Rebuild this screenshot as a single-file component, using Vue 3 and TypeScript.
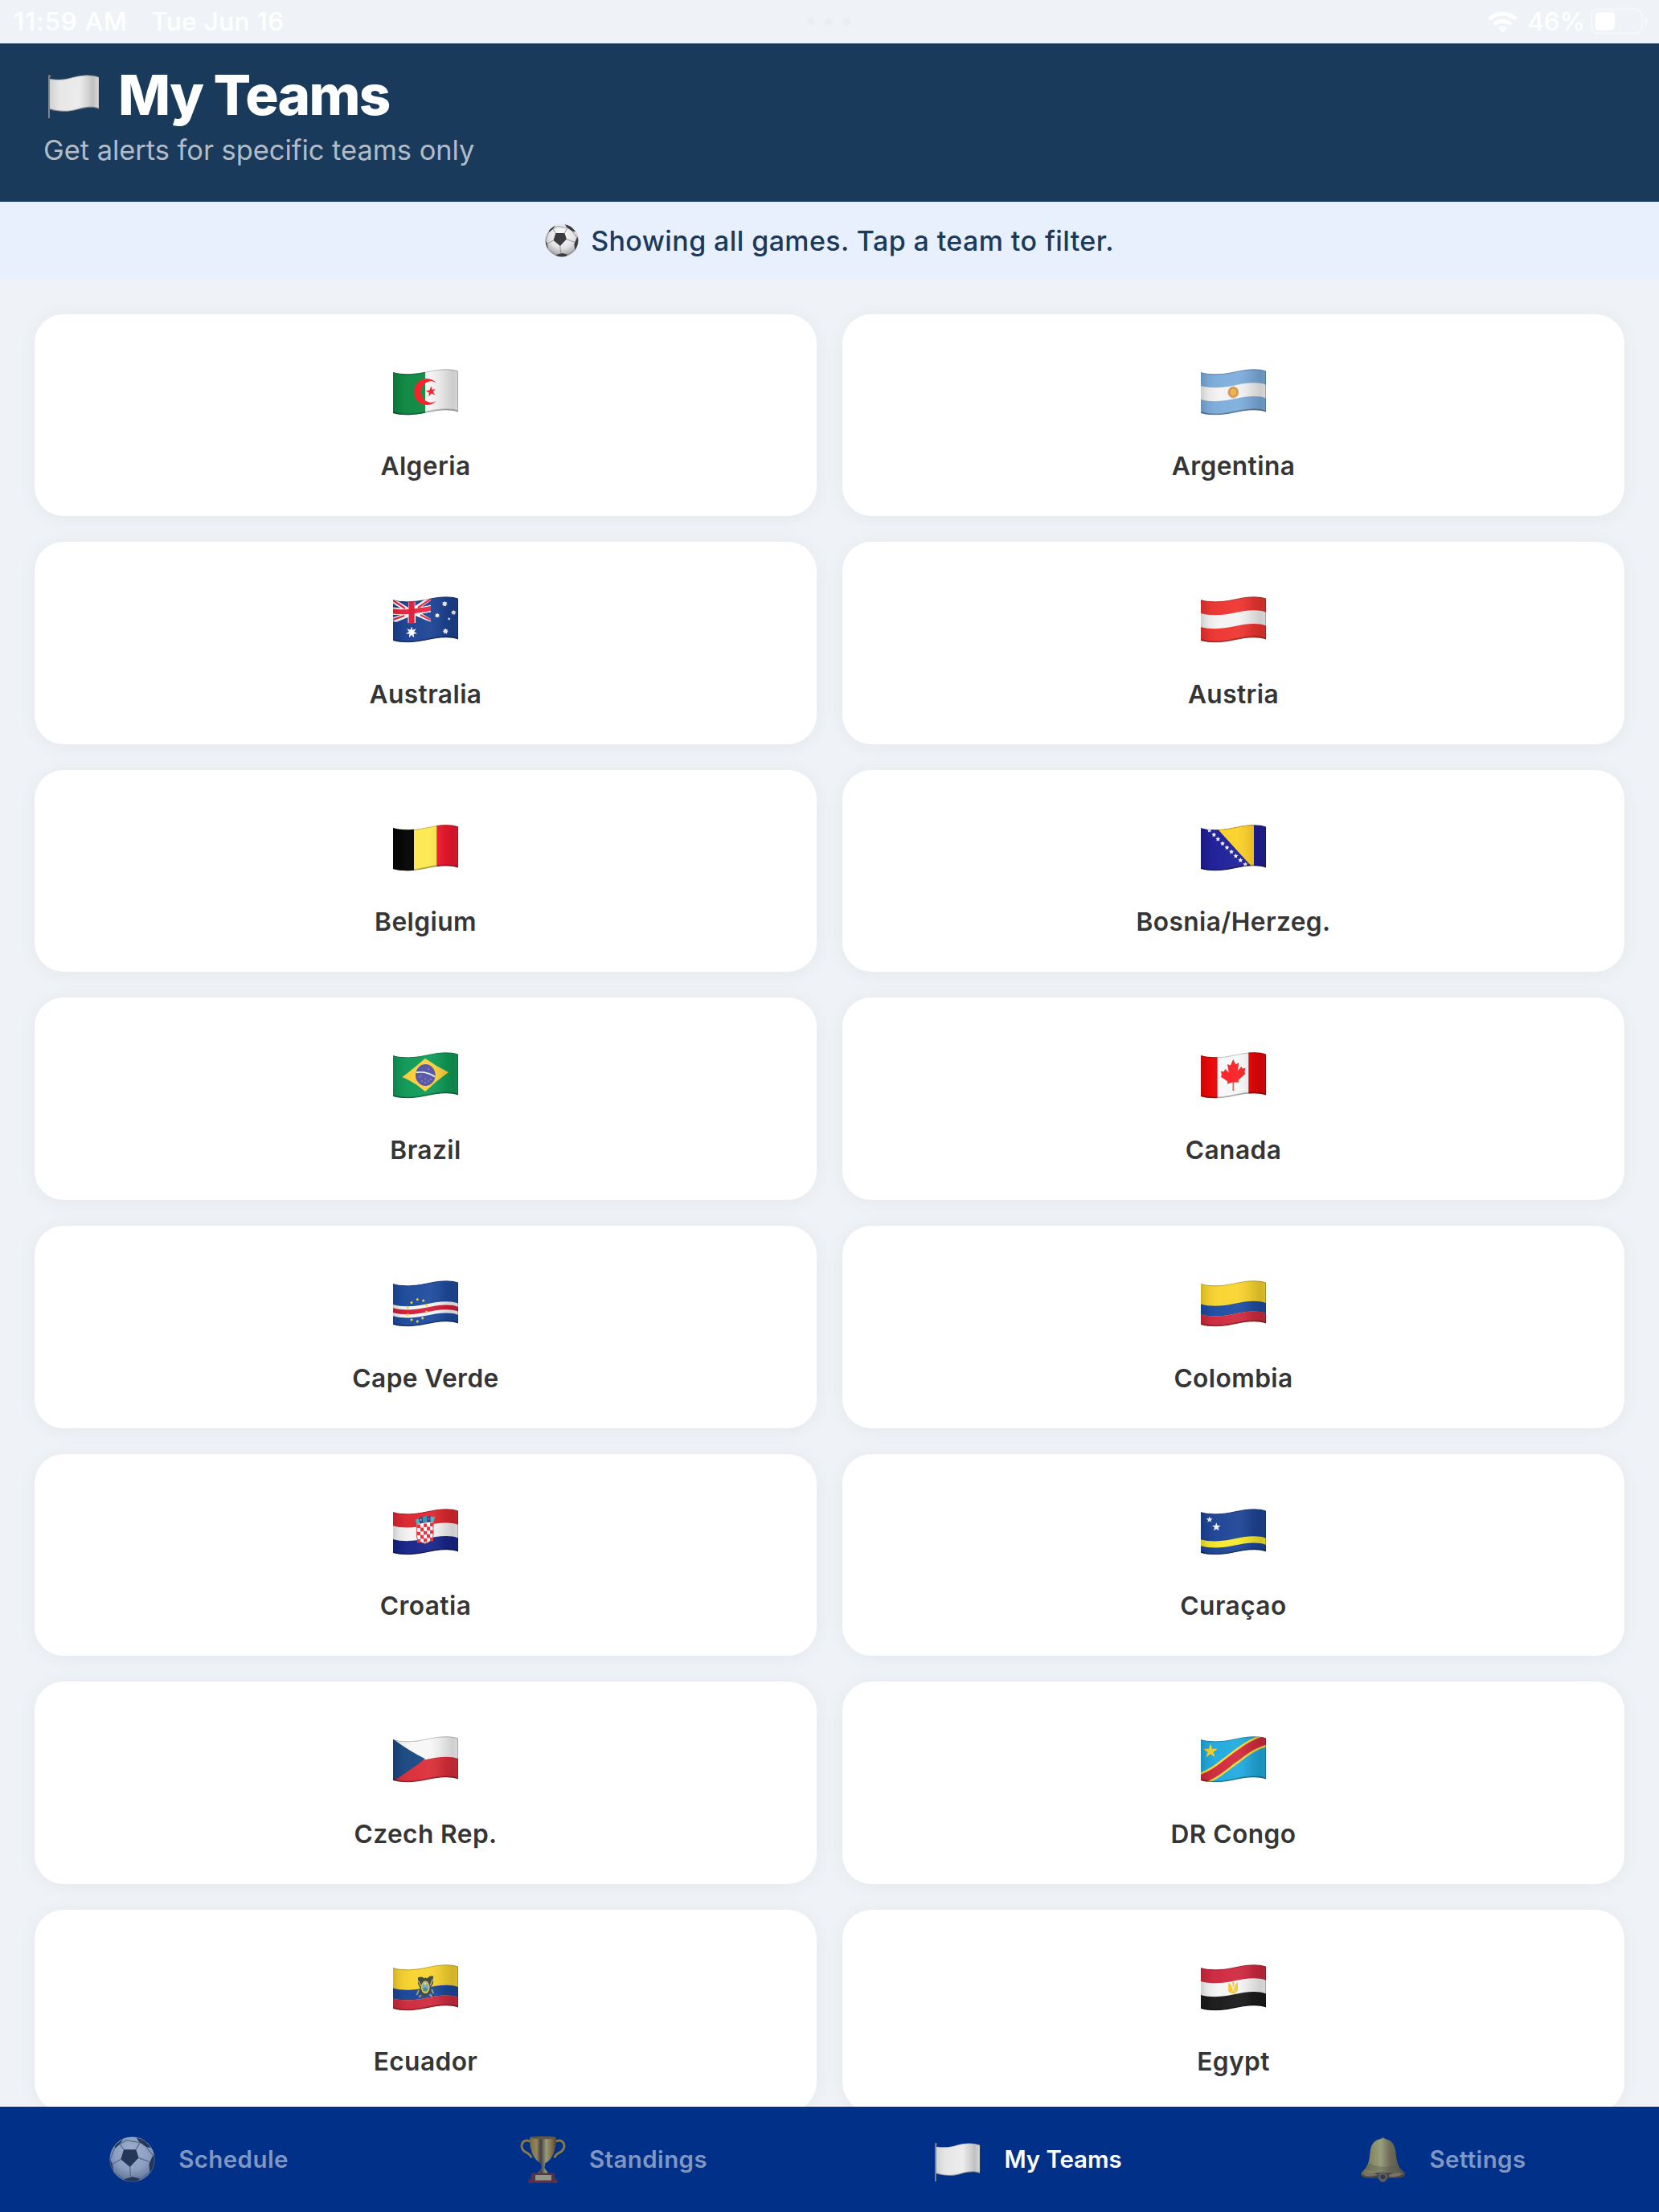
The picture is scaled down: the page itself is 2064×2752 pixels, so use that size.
<script setup lang="ts">
interface Shape { d: string; fill?: string; stroke?: string; sw?: number }
interface Team { name: string; shapes: Shape[] }

const f = (n: number) => n.toFixed(2)

/* Horizontal stripe that follows the flag's wave, from fraction a to b of its height. */
function band(a: number, b: number, fill: string): Shape {
  const t = a * 51
  const u = b * 51
  return {
    fill,
    d: `M-1 ${f(3.7 + t)} L0 ${f(4 + t)} C10 ${f(7 + t)} 25 ${f(7 + t)} 40 ${f(3.7 + t)} C54 ${f(0.6 + t)} 70 ${f(t - 1.8)} 81 ${f(2.6 + t)}` +
      ` V${f(2.6 + u)} C70 ${f(u - 1.8)} 54 ${f(0.6 + u)} 40 ${f(3.7 + u)} C25 ${f(7 + u)} 10 ${f(7 + u)} 0 ${f(4 + u)} L-1 ${f(3.7 + u)}Z`,
  }
}
function column(x0: number, x1: number, fill: string): Shape {
  return { fill, d: `M${x0} -2H${x1}V60H${x0}Z` }
}
function star(cx: number, cy: number, r: number, fill: string, n = 5, inner = 0.42): Shape {
  let d = ''
  for (let i = 0; i < n * 2; i++) {
    const q = i % 2 ? r * inner : r
    const a = -Math.PI / 2 + (i * Math.PI) / n
    d += (i ? 'L' : 'M') + f(cx + q * Math.cos(a)) + ' ' + f(cy + q * Math.sin(a))
  }
  return { fill, d: d + 'Z' }
}
function oval(cx: number, cy: number, rx: number, ry: number, fill: string): Shape {
  return { fill, d: `M${cx - rx} ${cy}a${rx} ${ry} 0 1 0 ${2 * rx} 0a${rx} ${ry} 0 1 0 ${-2 * rx} 0Z` }
}
const line = (d: string, stroke: string, sw: number): Shape => ({ d, stroke, sw, fill: 'none' })

function checks(): Shape[] {
  const out: Shape[] = []
  for (let r = 0; r < 5; r++)
    for (let c = 0; c < 5; c++)
      if ((r + c) % 2 === 0) {
        const x = 30 + c * 4
        const y = 19.5 + r * 4.6 - c * 0.5
        out.push({ fill: '#ee2b35', d: `M${x} ${y}h4v4.6h-4Z` })
      }
  return out
}

const full = (c: string) => band(0, 1, c)
const bosniaStars: [number, number][] = [[10.7, 7], [16.3, 12.6], [21.3, 18], [27, 23.4], [32.5, 28.5], [38, 33.8], [43.5, 39], [49.3, 44.2], [55.3, 49.4]]
const verdeStars: [number, number][] = [[30.3, 23.7], [37.7, 25.2], [41.7, 31], [41.7, 39.3], [36.7, 47], [30.3, 51], [23, 49], [18.3, 42.7], [18.3, 34], [23, 27.6]]

const teams: Team[] = [
  { name: 'Algeria', shapes: [full('#f4f4f4'), column(0, 40, '#0f8a43'),
    { fill: '#f51d26', d: 'M53.6 17.2A15.8 16.5 0 1 0 53.6 39.8A12.4 13.2 0 1 1 53.6 17.2Z' },
    { fill: '#f51d26', d: 'M47.3 21.3L48.7 25.8L53 25L49.8 28.3L52.3 32.4L47.9 30.6L44.4 34.3L44.7 29.4L40.8 27.4L45.5 26.3Z' }] },
  { name: 'Argentina', shapes: [full('#f4f4f4'), band(0, 0.335, '#7eaedd'), band(0.665, 1, '#7eaedd'),
    oval(40.3, 29, 6.8, 7.4, '#e3bb94'), star(40.3, 29, 7.4, '#cf9150', 16, 0.75), oval(40.3, 29, 3.8, 4.2, '#ecb13f')] },
  { name: 'Australia', shapes: [full('#1d4494'),
    { fill: '#f7f7fa', d: 'M0 3.5L7 6.5L19 14V6.8H27.5V12L40 3.5L47 2V5L36 13L47 10.8V19.5L36 21.5L47 28V31.5L42 30L28 24V33H18.5V26L4 32L0 31V26L9 23H0V13.5L9 14.5L0 9Z' },
    line('M0 5L15 15M47 3L31 14M0 29L14 24M47 29.5L34 23', '#ec2840', 2.2),
    { fill: '#ec2840', d: 'M0 15.6C15 17.5 32 14.5 47 12V18C32 20.5 15 23.5 0 21.6Z' },
    { fill: '#e01f38', d: 'M19.5 5H26.7V33.5L19.5 34Z' },
    star(23, 44.7, 7.3, '#fff', 7, 0.45), star(64.3, 9.3, 3.6, '#fff', 7, 0.6), star(55, 23.7, 3.2, '#fff', 7, 0.6),
    star(75.3, 20, 3.3, '#fff', 7, 0.6), star(65.3, 43.3, 3.7, '#fff', 7, 0.6), star(69.7, 28, 2.2, '#fff')] },
  { name: 'Austria', shapes: [full('#f4f4f4'), band(0, 0.335, '#ee3632'), band(0.665, 1, '#ee3632')] },
  { name: 'Belgium', shapes: [full('#fce84f'), column(0, 26, '#060606'), column(54.3, 81, '#f51a30')] },
  { name: 'Bosnia/Herzeg.', shapes: [full('#20209a'), { fill: '#fdd128', d: 'M16 0H66V54L64 53Z' },
    ...bosniaStars.map(([x, y]) => star(x, y, 3.1, '#f5f5ff', 5, 0.5))] },
  { name: 'Brazil', shapes: [full('#119c59'), { fill: '#fccf3b', d: 'M11.3 31Q27 19.5 40 7.8Q54 18 69 25Q54 35.5 40 49Q27 37.5 11.3 31Z' },
    oval(40.3, 28.5, 12.3, 13.6, '#5452a4'), line('M28.6 25.2Q42 23.5 52.2 30.6', '#d8efe2', 1.9),
    ...([[33, 31], [36, 36], [40, 33], [44, 36], [47, 34], [40, 38], [44, 21], [35, 29]] as [number, number][]).map(([x, y]) => oval(x, y, 0.7, 0.7, '#aaa8dc'))] },
  { name: 'Canada', shapes: [full('#f8f8f8'), column(0, 20.6, '#ee0808'), column(59.3, 81, '#ee0808'),
    { fill: '#fc2024', d: 'M40.2 9L43.4 15.3L47.2 13L46 23L50.6 17.7L51.8 20.6L55.6 19.8L54.2 24.8L55.4 26.8L46.6 35L47.4 37.6L40.8 37.4V48H39.6V37.6L32.6 39.4L33.4 36.6L24.8 30.6L26 28.6L24.8 23.8L28.8 24.2L30 21L34.8 25.2L33 15L36.8 16.4Z' }] },
  { name: 'Cape Verde', shapes: [full('#1f4c9f'), band(0.51, 0.79, '#f6f6f6'), band(0.595, 0.705, '#d4203c'),
    ...verdeStars.map(([x, y]) => star(x, y, 2, '#f2d32f', 5, 0.6))] },
  { name: 'Colombia', shapes: [full('#f9d52f'), band(0.5, 0.75, '#1f4ea3'), band(0.75, 1, '#d02b40')] },
  { name: 'Croatia', shapes: [full('#f5f5f5'), band(0, 0.34, '#de2830'), band(0.665, 1, '#18268a'),
    { fill: '#fff', d: 'M29.4 18.6L50 16.6V33Q49 41 39.8 43.3Q30.5 41.5 29.4 35Z' }, ...checks(),
    line('M29.4 18.6V35Q30.5 41.5 39.8 43.3Q49 41 50 33V16.6', '#e8404a', 1),
    { fill: '#3fb5c4', d: 'M27.8 14L31.5 12L33.5 18L29.6 19.8Z' }, { fill: '#263f96', d: 'M32.3 12L36.4 9.8L37.5 17.8L33.5 18.8Z' },
    { fill: '#2f94b8', d: 'M36.6 10.5L42 8.5L42.6 16.8L37.5 18Z' }, { fill: '#2c348a', d: 'M42.2 10L46.3 9L46.7 16.2L42.6 17Z' },
    { fill: '#46b9b9', d: 'M46.6 10L52.3 9.8L50.3 17L46.7 16.8Z' },
    oval(34.6, 14, 1, 1.3, '#e6b33c'), oval(44.4, 12.6, 1, 1.3, '#e05050')] },
  { name: 'Curaçao', shapes: [full('#1e4597'), band(0.67, 0.83, '#f7e92e'), star(10.7, 13.6, 4.2, '#f3f3fa'), star(19.3, 22.8, 5.6, '#f3f3fa')] },
  { name: 'Czech Rep.', shapes: [full('#f7f7f7'), band(0.5, 1, '#dc2f3a'), { fill: '#1c4a85', d: 'M0 3.5Q18 17 40 28.2Q22 42 0 56Z' }] },
  { name: 'DR Congo', shapes: [full('#23abe0'), line('M-6 55C14 51 28 37 40 28.4S66 7 87 4', '#f5d93a', 16), line('M-6 55C14 51 28 37 40 28.4S66 7 87 4', '#d22c3f', 11),
    star(12, 18.6, 9.4, '#f4d32c', 5, 0.39)] },
  { name: 'Ecuador', shapes: [full('#f8d430'), band(0.5, 0.75, '#1c489c'), band(0.75, 1, '#d02b40'),
    { fill: '#3c4438', d: 'M31 16.5Q36 14 39 17.5L40.5 16L42 17.5Q46 13 50 14.5L49.8 24L46.8 28.5L47 35L40 40L33.5 36.5V29L31 24Z' },
    line('M31.5 20L34.5 27M49.3 18L46.5 26', '#d8c955', 1.2),
    line('M32 32L29.5 38M48 31L50.3 36M35 38L32.5 41M45.5 37L48.5 40', '#a9a25e', 1.8),
    oval(40.2, 28.4, 5.4, 7.8, '#d3bd55'), oval(40.2, 27.7, 3.8, 5.8, '#75a8c9'), oval(40.2, 31, 3, 2.5, '#50886b'), oval(40.2, 24, 1.6, 1.4, '#f0d75c')] },
  { name: 'Egypt', shapes: [full('#f6f6f6'), band(0, 0.335, '#d02a40'), band(0.665, 1, '#1b1b1b'),
    { fill: '#fac53a', d: 'M34.2 22.5L37.6 25.2L39.8 30.2L40 31.6L36.6 35.4L34.2 33.6ZM46 21.7L43.2 24.6L41 30L40.8 31.6L43.6 34.8L46 33ZM38.9 22.2L40.2 21.4L41.6 22.4L40.8 28H39.8ZM40.4 32L44.4 36.2H36.2Z' }] },
]

const outline = band(0, 1, '').d
const tabs = [
  { name: 'Schedule', icon: 'ball' },
  { name: 'Standings', icon: 'cup' },
  { name: 'My Teams', icon: 'flag' },
  { name: 'Settings', icon: 'bell' },
]
</script>

<template>
  <div class="screen">
    <svg class="defs" width="0" height="0" aria-hidden="true">
      <defs>
        <clipPath id="wave"><path :d="outline" /></clipPath>
        <linearGradient id="shade" x1="0" x2="1" y1="0" y2="0">
          <stop offset="0" stop-color="#000" stop-opacity=".16" />
          <stop offset=".1" stop-color="#000" stop-opacity=".06" />
          <stop offset=".3" stop-color="#fff" stop-opacity=".02" />
          <stop offset=".55" stop-color="#fff" stop-opacity=".05" />
          <stop offset=".8" stop-color="#000" stop-opacity=".1" />
          <stop offset=".92" stop-color="#000" stop-opacity=".16" />
          <stop offset="1" stop-color="#000" stop-opacity=".12" />
        </linearGradient>
        <linearGradient id="cloth" x1="0" x2="1" y1="0" y2="0">
          <stop offset="0" stop-color="#d2d2d2" /><stop offset=".2" stop-color="#e6e6e6" />
          <stop offset=".6" stop-color="#ececec" /><stop offset=".78" stop-color="#d2d2d2" />
          <stop offset=".88" stop-color="#c0c0c0" /><stop offset="1" stop-color="#dadada" />
        </linearGradient>
        <radialGradient id="leather" cx=".5" cy=".35" r=".65">
          <stop offset="0" stop-color="#fff" /><stop offset=".6" stop-color="#e2e2e2" /><stop offset="1" stop-color="#9b9b9b" />
        </radialGradient>
        <linearGradient id="gold" x1="0" x2="1" y1="0" y2="0">
          <stop offset="0" stop-color="#c48c1c" /><stop offset=".25" stop-color="#eebd3e" /><stop offset=".42" stop-color="#6e4a1c" />
          <stop offset=".62" stop-color="#f6dd76" /><stop offset=".8" stop-color="#d8a228" /><stop offset="1" stop-color="#865810" />
        </linearGradient>
        <linearGradient id="brass" x1="0" x2="1" y1="0" y2="0">
          <stop offset="0" stop-color="#ac8b2c" /><stop offset=".3" stop-color="#e4cc58" /><stop offset=".45" stop-color="#f4e27a" />
          <stop offset=".65" stop-color="#b4923c" /><stop offset="1" stop-color="#7a6022" />
        </linearGradient>
        <clipPath id="round"><circle cx="30" cy="30" r="29" /></clipPath>
        <symbol id="ball" viewBox="0 0 60 60">
          <circle cx="30" cy="30" r="29.500" fill="url(#leather)" />
          <g clip-path="url(#round)">
            <path d="M19 17L35 17L38.500 28L27 40L15 30Z" fill="#3c3c3e" />
            <path d="M35 1L47 5L55 15L48.500 14L39 7ZM60 23V42L53 47L52 36L57 25ZM19 56L30 53L40 55L37 60H22ZM0 28L4 36L6 48L0 45ZM7 12L19 2L14 10L7 16Z" fill="#3c3c3e" />
            <path d="M19 17L14 10M35 17L40 8M38.500 28L52 33M27 40L28 54M15 30L4 36M40 8L22 5L14 10M6 47L20 56M53 47L40 56M48.500 14L58 26M7 15L1 30" fill="none" stroke="#8b8b8e" stroke-width="1.300" />
          </g>
        </symbol>
        <symbol id="cup" viewBox="0 0 60 62">
          <path d="M14 8C6 3 0 10 3 17C5 23 13 22 15 29M46 8C54 3 60 10 57 17C55 23 47 22 45 29" fill="none" stroke="#dba630" stroke-width="3" />
          <path d="M13 2H47C48 17 43 31 33 36L32 42L38 51H22L28 42L27 36C17 31 12 17 13 2Z" fill="url(#gold)" />
          <ellipse cx="30" cy="2.500" rx="17" ry="1.800" fill="#9a7526" />
          <path d="M15 49H45L46 58H14Z" fill="#8a3722" /><path d="M11 57H49V62H11Z" fill="#9a2c22" />
          <path d="M20 51.500H41V58.500H20Z" fill="#ebd98e" />
        </symbol>
        <symbol id="flag" viewBox="0 0 64 54">
          <path d="M1 1V54" stroke="#8e8e8e" stroke-width="1.800" /><circle cx="1.500" cy="1.800" r="1.700" fill="#777" />
          <path d="M2 5C13 7 21 6 31 3C43 0 53-.5 63 3V42.500C55 39 44 41 34 44C23 47 11 46 2 43Z" fill="url(#cloth)" />
          <path d="M2 42.500C11 45.500 23 46.500 34 43.500C44 40.500 55 38.500 63 42" fill="none" stroke="#000" stroke-opacity=".35" stroke-width="1.200" />
          <path d="M2 5.500C13 7.500 21 6.500 31 3.500C43 .5 53 0 63 3.500V42" fill="none" stroke="#000" stroke-opacity=".18" stroke-width="1" />
        </symbol>
        <symbol id="bell" viewBox="0 0 60 60">
          <path d="M27 5C26 0 34 0 33 5Z" fill="#b69b48" />
          <path d="M30 3C41 4 46 10 47 22C48 34 50 40 57 46C61 50 58 53 52 54H8C2 53 0 50 3 46C10 40 12 34 13 22C14 10 19 4 30 3Z" fill="url(#brass)" />
          <path d="M12 35C25 41 38 41 48 36L53 43C38 49 20 48 7 43Z" fill="#8f7532" opacity=".4" />
          <ellipse cx="30" cy="51" rx="27" ry="4" fill="#6a5124" />
          <path d="M5 49Q14 45 24 50Q14 54 5 51ZM38 50Q48 46 56 49Q50 54 38 53Z" fill="#c79a52" />
          <path d="M25 48H35L36 54Q34 60 30 60T24 54Z" fill="#987746" /><circle cx="30" cy="53" r="3" fill="#51401f" />
        </symbol>
      </defs>
    </svg>

    <div class="status">
      <span class="time">11:59 AM</span>
      <span class="date">Tue Jun 16</span>
      <span class="dots"><i /><i /><i /></span>
      <svg class="wifi" width="37" height="28" viewBox="0 0 38 28" fill="none" stroke="#fff" stroke-width="5">
        <path d="M2 10.800A24 24 0 0 1 36 10.800M8.500 17.500A15 15 0 0 1 29.500 17.500" />
        <path d="M12.800 22.200A9 9 0 0 1 25.200 22.200L19 28Z" fill="#fff" stroke="none" />
      </svg>
      <span class="percent">46%</span>
      <svg class="battery" width="72" height="33" viewBox="0 0 72 33">
        <rect x="1.200" y="1.200" width="62.600" height="30.600" rx="8.500" fill="none" stroke="#fff" stroke-opacity=".4" stroke-width="2.400" />
        <rect x="5.500" y="5.500" width="24.500" height="22" rx="4.500" fill="#fff" />
        <path d="M67 11Q71 13 71 16.500T67 22Z" fill="#fff" fill-opacity=".5" />
      </svg>
    </div>

    <header class="header">
      <div class="title-row">
        <svg class="title-flag"><use href="#flag" /></svg>
        <h1>My Teams</h1>
      </div>
      <p>Get alerts for specific teams only</p>
    </header>

    <div class="banner">
      <svg class="banner-ball"><use href="#ball" /></svg>
      <span>Showing all games. Tap a team to filter.</span>
    </div>

    <main class="grid">
      <button v-for="team in teams" :key="team.name" class="card">
        <svg class="team-flag" viewBox="0 0 81 58">
          <g clip-path="url(#wave)">
            <path v-for="(s, i) in team.shapes" :key="i" :d="s.d" :fill="s.fill" :stroke="s.stroke" :stroke-width="s.sw" />
            <rect width="81" height="58" fill="url(#shade)" />
            <path :d="outline" fill="none" stroke="#000" stroke-opacity=".22" stroke-width="2" />
            <path d="M0 55C10 58 25 58 40 54.700C54 51.600 70 49.200 81 53.600" fill="none" stroke="#000" stroke-opacity=".18" stroke-width="4" />
          </g>
        </svg>
        <span class="label">{{ team.name }}</span>
      </button>
    </main>

    <nav class="tabs">
      <a v-for="tab in tabs" :key="tab.name" class="tab" :class="{ active: tab.icon === 'flag' }">
        <svg class="tab-icon" :class="tab.icon"><use :href="'#' + tab.icon" /></svg>
        <span>{{ tab.name }}</span>
      </a>
    </nav>
  </div>
</template>

<style>
body { margin: 0; background: #eff3f8; }
</style>

<style scoped>
.screen {
  width: 2064px;
  height: 2752px;
  display: flex;
  flex-direction: column;
  overflow: hidden;
  background: #eff3f8;
  font-family: Inter, "Liberation Sans", sans-serif;
}
.defs { position: absolute; }
.status {
  position: relative;
  flex: 0 0 53.5px;
  display: flex;
  align-items: center;
  box-sizing: border-box;
  padding: 0 13px 0 17px;
  color: #fff;
  font-size: 31.5px;
  font-weight: 500;
  line-height: 53px;
  white-space: pre;
}
.time { width: 171px; letter-spacing: .9px; }
.date { flex: 1; letter-spacing: .4px; }
.dots {
  position: absolute;
  left: 1004px;
  top: 22px;
  display: flex;
  gap: 12px;
}
.dots i { width: 10px; height: 10px; border-radius: 50%; background: #eaeef3; }
.percent { margin: 0 7px 0 12px; }
.header {
  flex: 0 0 197px;
  box-sizing: border-box;
  padding: 24px 54px 0;
  background: #1a3a5c;
}
.title-row { display: flex; align-items: flex-start; }
.title-flag { width: 64px; height: 54px; margin: 15px 23px 0 6px; }
h1 {
  margin: 0;
  color: #fff;
  font-size: 69px;
  font-weight: 800;
  line-height: 80px;
  letter-spacing: -1.7px;
}
p {
  margin: 7px 0 0;
  color: #b2bcc8;
  font-size: 34.400px;
  line-height: 44px;
}
.banner {
  flex: 0 0 97px;
  display: flex;
  align-items: center;
  justify-content: center;
  color: #1a3a5c;
  background: #e8effd;
  font-size: 34px;
  font-weight: 500;
  line-height: 97px;
  letter-spacing: .4px;
}
.banner-ball { width: 42px; height: 42px; margin-right: 15px; }
.grid {
  flex: 1;
  min-height: 0;
  display: grid;
  grid-template-columns: 1fr 1fr;
  grid-auto-rows: 251.6px;
  gap: 32px;
  padding: 43.2px 43px 0;
  overflow: hidden;
}
.card {
  display: flex;
  flex-direction: column;
  align-items: center;
  box-sizing: border-box;
  padding: 68px 0 0;
  border: 0;
  border-radius: 36px;
  background: #fff;
  box-shadow: 0 2px 24px rgba(0, 0, 0, .05);
  font-family: inherit;
}
.team-flag { width: 81px; height: 58px; }
.label {
  margin-top: 43.5px;
  color: #353535;
  font-size: 31.7px;
  font-weight: 600;
  line-height: 40px;
  letter-spacing: .4px;
}
.tabs {
  position: relative;
  flex: 0 0 131.5px;
  display: flex;
  background: #003087;
}
.tab {
  flex: 1;
  display: flex;
  align-items: center;
  justify-content: center;
  box-sizing: border-box;
  padding-right: 21px;
  color: #8097c3;
  font-size: 29.5px;
  font-weight: 600;
  line-height: 131px;
  letter-spacing: .4px;
}
.tab.active { color: #fff; letter-spacing: -.1px; }
.tab-icon { width: 57px; height: 57px; margin-right: 29px; opacity: .62; }
.tab-icon.cup { height: 59px; }
.tab-icon.flag { height: 50px; opacity: 1; margin-top: 7px; }
</style>
